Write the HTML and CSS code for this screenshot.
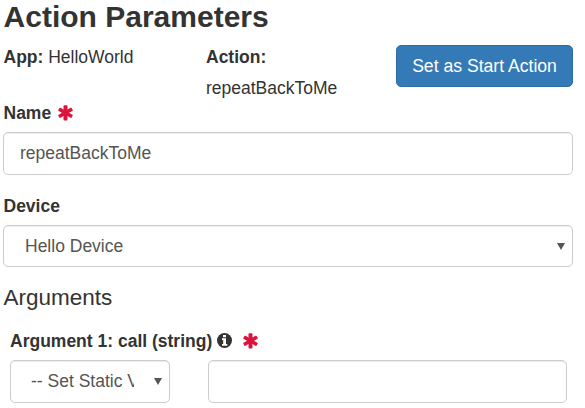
FILE: index.html
```html
<!DOCTYPE html>
<html lang="en">
<head>
<meta charset="utf-8">
<title>Action Parameters</title>
<link rel="stylesheet" href="styles.css">
</head>
<body>
<svg class="defs" width="0" height="0"><symbol id="asterisk" viewBox="0 0 15 16"><g fill="currentColor"><rect x="5.5" y="0.2" width="4" height="15.2" rx="0.9"/><rect x="5.7" y="0.1" width="3.6" height="15.4" rx="0.9" transform="rotate(60 7.5 7.8)"/><rect x="5.7" y="0.1" width="3.6" height="15.4" rx="0.9" transform="rotate(-60 7.5 7.8)"/></g></symbol></svg>
<main class="panel">
  <h2 class="title">Action Parameters</h2>
  <div class="summary">
    <div class="app"><b>App:</b> HelloWorld</div>
    <div class="action"><b>Action:</b><br>repeatBackToMe</div>
    <button class="start">Set as Start Action</button>
  </div>
  <div class="label name-label">Name <svg class="required"><use href="#asterisk"/></svg></div>
  <div class="control name-control">repeatBackToMe</div>
  <div class="label device-label">Device</div>
  <div class="control select device-control"><span>Hello Device</span><i class="arrow"></i></div>
  <h4 class="subtitle">Arguments</h4>
  <section class="argument">
    <div class="label">Argument 1: call (string) <svg class="info" viewBox="0 0 15 15"><circle cx="7.5" cy="7.5" r="7.5" fill="currentColor"/><path d="M6 2h3v2.2H6zM5 5.2h4v5.8h1.3v1.8H5V11h1.2V7H5z" fill="#fff"/></svg><svg class="required"><use href="#asterisk"/></svg></div>
    <div class="fields">
      <div class="control select source"><span>-- Set Static Value --</span><i class="arrow"></i></div>
      <div class="control value"></div>
    </div>
  </section>
</main>
</body>
</html>
```

FILE: styles.css
```css
* { box-sizing: border-box; }
body { margin: 0; overflow: hidden; background: #fff; color: #333; font: 17.5px/31px "Liberation Sans", Arial, sans-serif; }
.defs { position: absolute; }
.panel { width: 573px; padding-left: 3px; }
.title { margin: 0; height: 41px; padding-left: 0.6px; font-size: 30px; line-height: 33px; white-space: nowrap; }
.summary { display: grid; grid-template-columns: 203px 190px 177px; height: 61px; }
.app, .action { padding-top: 1px; }
.app, .name-label, .device-label { padding-left: 0.5px; }
.start { height: 42px; margin: 4px 0 0; padding: 0; border: 1px solid #2e6da4; border-radius: 5px; background: #337ab7; color: #fff; font: 17.6px/25px "Liberation Sans", Arial, sans-serif; }
.label { display: flex; align-items: center; height: 22px; font-weight: bold; line-height: 22px; white-space: nowrap; }
.required { width: 15px; height: 16px; margin-left: 7px; color: #dc143c; }
.control { height: 42px; padding: 0 16px; border: 1px solid #ccc; border-radius: 5px; color: #555; line-height: 40px; box-shadow: inset 0 1px 1px rgba(0,0,0,.075); }
.name-control { margin-top: 8px; height: 43px; }
.device-label { margin-top: 20px; }
.device-control { margin-top: 8px; }
.select { display: flex; align-items: center; justify-content: space-between; padding: 0 7px 0 21px; }
.select span { overflow: hidden; white-space: nowrap; }
.arrow { border: 4px solid transparent; border-top: 7px solid #555; border-bottom: 0; }
.subtitle { margin: 18px 0 0; height: 25px; padding-left: 0.5px; font-size: 22.5px; line-height: 25px; font-weight: normal; }
.argument { padding: 20px 6px 0 7px; }
.info { width: 15px; height: 15px; margin: 0 0 1px 4.3px; }
.info + .required { margin-left: 11.7px; }
.fields { display: flex; gap: 38px; margin-top: 8px; }
.fields .control { height: 43px; }
.fields .source { width: 160px; padding-left: 20px; padding-bottom: 1px; }
.source span { width: 103px; }
.value { flex: 1; }
```
